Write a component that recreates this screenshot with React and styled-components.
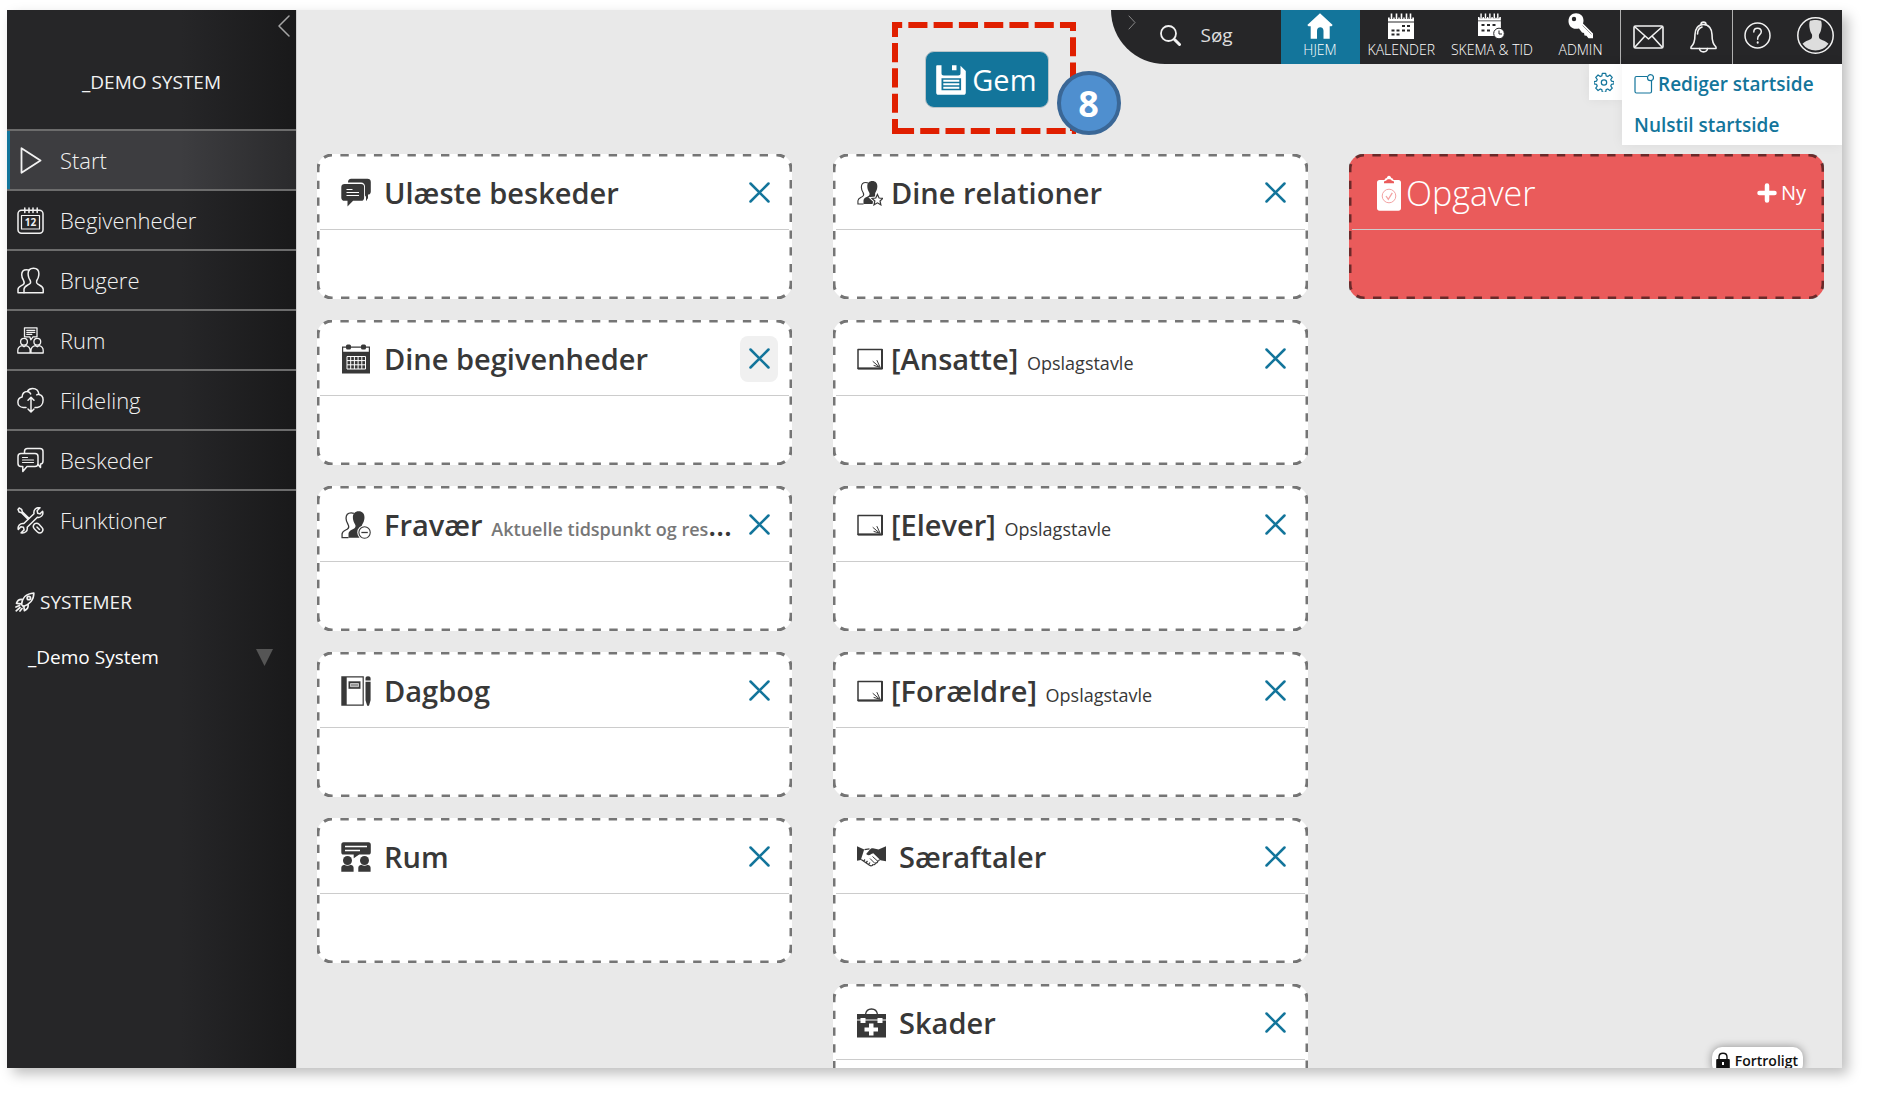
import React from "react";
import styled, { createGlobalStyle, css } from "styled-components";

const blue = "#13759b";

/* ---------- icons ---------- */

const Line = ({ w = 27, h = 27, box, sw = 1.5, children }) => (
  <svg
    width={w}
    height={h}
    viewBox={box || `0 0 ${w} ${h}`}
    fill="none"
    stroke="currentColor"
    strokeWidth={sw}
    strokeLinecap="round"
    strokeLinejoin="round"
    aria-hidden="true"
  >
    {children}
  </svg>
);

const Solid = ({ w = 30, h = 30, box, children }) => (
  <svg
    width={w}
    height={h}
    viewBox={box || `0 0 ${w} ${h}`}
    fill="currentColor"
    aria-hidden="true"
  >
    {children}
  </svg>
);

const headPath =
  "M16.5 1.2c3.5 0 5.4 2.3 5.4 5.6 0 1.6-.3 2.6-.6 3.6-.4 1.3-1.3 2.6-1.7 3.6-.3 1.3.1 2.6 1.2 3.2 2.5 1.4 5.2 2 5.4 5v3.6H7v-3.6c.2-3 2.9-3.6 5.3-5 1.1-.6 1.5-1.9 1.1-3.2-.4-1-1.3-2.3-1.7-3.6-.3-1-.6-2-.6-3.6 0-3.3 1.900-5.600 5.400-5.600z";
const backPath =
  "M12 3.2c-.8-.4-1.6-.5-2.5-.5-3 0-4.800 2.100-4.800 5 0 2.600 1 4.300 1.900 5.900.8 1.500.7 3.400-.8 4.300-2 1.200-4.600 1.700-4.800 4.400v3.500h6";

const PlayIcon = () => (
  <Line sw={1.8}>
    <path d="M4.500 1.200 23.500 13.500 4.500 25.800z" />
  </Line>
);

const Calendar12Icon = () => (
  <Line>
    <rect x="1" y="3.200" width="25" height="23" rx="3.500" />
    <rect x="4.500" y="8.500" width="18" height="13.500" strokeWidth="1.200" />
    <path d="M7.800 1v4.500M12 1v4.500M16 1v4.500M20.200 1v4.500" />
    <text
      x="13.500"
      y="19"
      textAnchor="middle"
      fontFamily="Open Sans, sans-serif"
      fontSize="10"
      fontWeight="700"
      fill="currentColor"
      stroke="none"
    >
      12
    </text>
  </Line>
);

const UsersIcon = () => (
  <Line>
    <path d={headPath} />
    <path d={backPath} />
  </Line>
);

const RoomIcon = () => (
  <Line sw={1.3}>
    <path d="M7.500.8h12.500v9h-4l-2.200 3-1-3h-5.300z" />
    <path d="M9.800 3.300h8M9.800 5.300h8M9.800 7.300h5" />
    <circle cx="7" cy="14.800" r="3.400" />
    <circle cx="20.300" cy="14.800" r="3.400" />
    <path d="M.8 26v-2.500c0-2.800 2-4.400 4.400-4.900l1.800 1.200 1.800-1.200c2.400.5 4.300 2.100 4.300 4.900V26zM14 26v-2.500c0-2.800 2-4.400 4.400-4.900l1.900 1.200 1.800-1.200c2.300.5 4.100 2.100 4.100 4.900V26z" />
  </Line>
);

const CloudIcon = () => (
  <Line>
    <path d="M9 20.500H6.200C3 20.300.9 18 .9 15.200c0-2.600 1.800-4.700 4.200-5.200-.1-3.300 2.300-5.800 5.300-5.600C11.600 2.300 13.500 1.500 15.600 1.500c3.500 0 6 2.400 6.400 5.900 2.500.5 4.100 2.700 4.100 5.500 0 4-2.500 7-5.700 7.600h-2.400" />
    <path d="M10.400 4.400c1.600.2 2.800 1 3.300 2.500M22 7.400c-.7-.1-1.500 0-2.300.4" />
    <path d="M14 10.500v14M11 13.300l3-3 3 3M11 22l3 3 3-3" />
  </Line>
);

const ChatIcon = () => (
  <Line>
    <path d="M7.500 6V4.500c0-2 1-3 3-3H23c2 0 3 1 3 3v9.500c0 2-.8 2.900-2.500 3v3.500L21 17.500" />
    <path d="M4 6.500h14c2 0 3 1 3 3v7c0 2-1 3-3 3H10l-4.200 5v-5H4c-2 0-3-1-3-3v-7c0-2 1-3 3-3z" />
    <path d="M5.500 10.500h5M5.500 13h11M5.500 15.500h11" strokeWidth="1.200" />
  </Line>
);

const ToolsIcon = () => (
  <Line>
    <path d="M2.200 1 1 2.500l1.200 2.600 2.300.6L11 12.300l1-1L5.300 4.800 4.600 2.300z" />
    <path d="M17 17.500c1-1.700 3.600-1.600 5-.2l2.700 2.900c1.500 1.600 1.500 3.500.3 4.800-1.300 1.300-3.300 1.200-4.800-.3L17.500 22c-1.300-1.300-1.500-3.100-.5-4.500z" />
    <path d="m20 20 2.500 2.500" />
    <path d="M25.600 4.300c1.200 3.500-1.600 6.700-5.200 6l-10.200 9.900c.8 3.700-2.500 6.600-6.100 5.600l3-2.900-.6-2.600-2.600-.6-2.600 2.800c-1-3.500 1.800-6.700 5.500-6L17 6.700c-.8-3.600 2.300-6.800 6-5.900l-2.900 3 .6 2.400 2.300.7z" />
  </Line>
);

const RocketIcon = () => (
  <Line w={20} h={20} sw={1.7}>
    <path d="M6.500 12.500C7 6.500 11 1.500 18.800 1c.2 6.500-4.300 11.500-10.500 13.500z" />
    <path d="M7.500 7.500C4.500 7 2.500 8.500 1.500 11.300l4.800.5M13 12.500c.8 2.800-1 4.900-3.600 6.200l-.6-4.500" />
    <circle cx="13.800" cy="6" r="1.700" />
    <path d="M4.500 13.500 1 15M5 15.500l-3.800 3.300M7 16.500 5 19" />
  </Line>
);

const ChatSolid = () => (
  <Solid>
    <path d="M7 4.500V4c0-2 1.200-3.300 3.200-3.300h16.300c2 0 3.300 1.200 3.300 3.200v9.500c0 1.900-1 3-2.800 3.200v5l-3-4V8.800c0-2.500-1.500-4.300-4-4.300z" />
    <path d="M3.600 6h16.500c2 0 3 1.200 3 3.200v10.500c0 2-1 3.100-3 3.100h-8L6.500 28.500v-5.700H3.600c-2 0-3.300-1.100-3.300-3.100V9.200C.3 7.200 1.600 6 3.600 6z" />
    <path
      d="M5.500 11.500h6M5.500 14.500h12.500M5.500 17.500h12.500"
      fill="none"
      stroke="#fff"
    />
    <path d="M25.500 16v6.500" fill="none" stroke="currentColor" />
  </Solid>
);

const CalendarSolid = () => (
  <Solid>
    <path d="M1 2.500h28v27H1zM2.200 3.700v4h25.600v-4z" fillRule="evenodd" />
    <rect x="5" y=".5" width="5" height="5" rx="1.500" />
    <rect x="20" y=".5" width="5" height="5" rx="1.500" />
    <path
      d="M6 12.500h18.500v12.500H6zM6 16.600h18.500M6 20.800h18.500M9.700 12.500v12.500M13.400 12.500v12.500M17.100 12.500v12.500M20.800 12.500v12.500"
      fill="none"
      stroke="#fff"
    />
  </Solid>
);

const UsersSolid = ({ w = 30, children }) => (
  <Solid w={w} h={w} box="0 0 28 28">
    <path d={backPath} fill="none" stroke="currentColor" strokeWidth="1.200" />
    <path d={headPath} />
    {children}
  </Solid>
);

const AbsenceIcon = () => (
  <UsersSolid>
    <circle cx="22" cy="21" r="6.800" fill="#fff" />
    <circle cx="22" cy="21" r="5.300" fill="#fff" stroke="currentColor" />
    <path d="M19 21h6" stroke="currentColor" strokeWidth="1.200" />
  </UsersSolid>
);

const RelationsIcon = () => (
  <UsersSolid w={26}>
    <path
      d="m22 15.500 1.800 3.900 4 .4-3 2.800.9 4.200-3.700-2.200-3.700 2.200.9-4.200-3-2.800 4-.4z"
      fill="#fff"
      stroke="#fff"
      strokeWidth="3.500"
    />
    <path
      d="m22 15.500 1.800 3.900 4 .4-3 2.800.9 4.200-3.700-2.200-3.700 2.200.9-4.200-3-2.800 4-.4z"
      fill="#fff"
      stroke="currentColor"
      strokeWidth="1.300"
    />
  </UsersSolid>
);

const DiaryIcon = () => (
  <Solid>
    <path
      d="M.3.300h22.500v29.500H.3zM5.700 1.500v27h15.900v-27z"
      fillRule="evenodd"
    />
    <path d="M7.500 5.300h12v7.500h-12z" />
    <path d="M9.500 7.500h8v3.200h-8z" fill="#999" stroke="#fff" strokeWidth=".6" />
    <path d="M24.500 2.500c0-1.300.9-2.200 2.500-2.200s2.600.9 2.600 2.200v2h-5.100zM24.500 5.800h5.100v18.500l-1.600 5.500h-1.800l-1.700-5.500z" />
  </Solid>
);

const MeetingIcon = () => (
  <Solid>
    <path d="M2.500.3h25c1.500 0 2.300.9 2.300 2.400v7.500c0 1.500-.8 2.300-2.300 2.300h-9.300l-5.500 3.800v-3.800H2.500c-1.500 0-2.200-.8-2.200-2.300V2.700C.3 1.200 1 .3 2.500.3z" />
    <path d="M4 4.500h22M4 8.500h15" stroke="#fff" strokeWidth="1.500" />
    <circle cx="6.500" cy="18.500" r="4.500" />
    <circle cx="23.500" cy="18.500" r="4.500" />
    <path d="M.3 29.800v-4c0-1.600 1.200-2.800 3-3.100 2 1.500 4.300 1.500 6.300 0 1.900.3 3 1.500 3 3.100v4zM17.300 29.800v-4c0-1.600 1.200-2.800 3-3.100 2 1.500 4.300 1.500 6.300 0 1.900.3 3 1.500 3 3.100v4z" />
  </Solid>
);

const BoardIcon = () => (
  <Line w={26} h={22} sw={1.5}>
    <path d="M1 1.500h24v19H1z" />
    <path d="M1.500 20.500h23.500V2" strokeWidth="2" />
    <path d="m16 13.500 6.500 5.500M20 12.500l3 6.500M17 17.500l5 1.500" strokeWidth="1" />
  </Line>
);

const HandshakeIcon = () => (
  <Solid w={29} h={21}>
    <path d="M0 .3 7.200 3.500 3.800 14 0 14.800z" />
    <path d="M29 .3 21.500 3.500 16 2.300c-1.300-.2-2.200.3-3 1.200L9.300 7.800c.8 2 3.200 1.800 5 .2l2-.8 7.200 7 5.500 1z" />
    <path
      d="M7.500 3.600 12.500 2.800M4.200 13.500l8.300 5.800c1.500 1 2.800.5 3.300-.6 1.500.3 2.500-.5 2.700-1.600 1.500 0 2.300-.9 2.200-2 1.300-.2 1.800-.9 1.700-1.700M8 13.500l-1.500 1.800M10.500 15l-1.700 2M13 16.500l-1.500 2"
      fill="none"
      stroke="currentColor"
      strokeWidth="1.200"
    />
    <path
      d="m13 12.500 4.500 4.500M15.500 10.500l5 4.500"
      fill="none"
      stroke="currentColor"
    />
  </Solid>
);

const FirstAidIcon = () => (
  <Solid w={29} h={30}>
    <path
      d="M8.500 6.500C9 2.800 11.500 1 14.500 1s5.500 1.800 6 5.500"
      fill="none"
      stroke="currentColor"
      strokeWidth="1.300"
    />
    <path d="M0 6h29v5.500H0zM0 12.500h29v17H0z" />
    <path d="M3.500 10h5v5h-5zM20.500 10h5v5h-5z" fill="#fff" />
    <path d="M12 15.500h4.500v4H21v4h-4.500v4H12v-4H7.500v-4H12z" fill="#fff" />
  </Solid>
);

const ClipboardIcon = () => (
  <Solid w={24} h={36}>
    <path
      d="M2.500 5h5c.3-1.200 1.200-2 2.200-2 .3-1.300 1.100-2.300 2.300-2.300s2 1 2.300 2.300c1 0 1.900.8 2.200 2h5C23 5 24 6 24 7.500v25.800c0 1.500-1 2.500-2.500 2.500h-19C1 35.800 0 34.800 0 33.300V7.500C0 6 1 5 2.500 5zM7 8.300h10V6.600l-2.400-1.200c-.5-1.600-4.700-1.600-5.200 0L7 6.600z"
      fillRule="evenodd"
    />
    <circle cx="12" cy="21" r="6.800" fill="none" stroke="#f3a3a3" />
    <path d="m9 21 2.300 3.300 4-6.500" fill="none" stroke="#f3a3a3" strokeWidth="1.300" />
  </Solid>
);

const CrossIcon = () => (
  <Line w={21} h={21} sw={2.5}>
    <path d="m1.500 1.500 18 18M19.500 1.500l-18 18" />
  </Line>
);

const PlusIcon = () => (
  <Line w={20} h={20} sw={4.5}>
    <path d="M10 2.500v15M2.500 10h15" />
  </Line>
);

const SaveIcon = () => (
  <Solid w={30} h={30}>
    <path
      d="M1.500.3h4v8c0 1.500.8 2.200 2.200 2.200h14.500c1.500 0 2.300-.7 2.300-2.200V.8L29.800 6v21.500c0 1.500-.8 2.300-2.200 2.300H2.400C1 29.800.2 29 .2 27.500V1.600C.2.800.6.3 1.500.3zM5.500 13.200v12.100h19.600V13.200z"
      fillRule="evenodd"
    />
    <path d="M16 .3h4.500v5H16zM7.300 14.800h16v2h-16zM7.300 18.300h16v2h-16zM7.300 21.800h16v2h-16z" />
  </Solid>
);

const HomeIcon = () => (
  <Solid w={26} h={26}>
    <path d="M13 .3 25.700 12l-1.200 1.300H22.700v12.400h-6.200v-8c0-4.500-6.500-4.500-6.500 0v8H3.700V13.300H1.500L.3 12z" />
  </Solid>
);

const CalendarTop = () => (
  <>
    <path d="M0 4.500h26v4H0zM0 9.500h26v16.500H0z" />
    <path
      d="M3.500 1v5M8.500 1v5M13.500 1v5M18.500 1v5M22.500 1v5"
      stroke="#262628"
      strokeWidth="3.500"
    />
    <path
      d="M3.500.500v5.500M8.500.500v5.500M13.500.500v5.500M18.500.500v5.500M22.500.500v5.500"
      stroke="#fff"
      strokeWidth="1.600"
    />
  </>
);

const CalendarIcon = () => (
  <Solid w={26} h={26}>
    <CalendarTop />
    <path
      d="M14 13h3M19 13h3M3.500 17.500h3M8.500 17.500h3M14 17.500h3M19 17.500h3M3.500 21.500h3M8.500 21.500h3"
      stroke="#262628"
      strokeWidth="2.200"
    />
  </Solid>
);

const ScheduleIcon = () => (
  <Solid w={27} h={26}>
    <g transform="scale(.88)">
      <CalendarTop />
    </g>
    <path
      d="M3.500 12h3M9 12h3M14.500 12h3M3.500 17.500h3M9 17.500h3"
      stroke="#262628"
      strokeWidth="2.200"
    />
    <circle cx="21" cy="20.500" r="5.300" stroke="#262628" strokeWidth="1" />
    <path d="M21 17.500v3.500h3" fill="none" stroke="#262628" />
  </Solid>
);

const KeyIcon = () => (
  <Solid w={26} h={26}>
    <path
      d="M8 .3c4.500 0 7.500 3 7.500 7.300 0 1.200-.2 2-.5 2.800l10 10.100v4.700h-4.500l-2-2.500-2-.3-.5-2.500-2-.5-3-4c-1 .3-2 .4-3 .4-4.300 0-7.500-3.200-7.500-7.600C.5 3.500 3.700.3 8 .3zM6 3.800a2.200 2.200 0 1 0 0 4.400 2.200 2.200 0 0 0 0-4.400z"
      fillRule="evenodd"
    />
    <path d="m14.500 12.500 9 9" stroke="#888" strokeWidth=".8" />
  </Solid>
);

const SearchIcon = () => (
  <Line w={21} h={21} sw={1.8}>
    <circle cx="8.500" cy="8.500" r="7.500" />
    <path d="m14.500 14.500 5 5" strokeWidth="3" />
  </Line>
);

const MailIcon = () => (
  <Line w={31} h={24} sw={1.6}>
    <rect x="1" y="1" width="29" height="22" rx="1.500" />
    <path d="m2 2 13.500 12L29 2M2 22l9.500-10.500M29 22l-9.500-10.500" />
  </Line>
);

const BellIcon = () => (
  <Line w={27} h={32} sw={1.6}>
    <path d="M13.500 3.500c-5.500 0-8.500 4.500-8.500 10 0 6.500-1 10-4 12.500v1.500h25V26c-3-2.500-4-6-4-12.500 0-5.500-3-10-8.500-10z" />
    <path d="M11 3.500C11 .3 16 .3 16 3.500M9.500 27.500c.5 4.500 7.500 4.500 8 0M7.500 13c0-3.500 1.500-6 4.500-7" />
  </Line>
);

const HelpIcon = () => (
  <Line>
    <circle cx="13.500" cy="13.500" r="12.500" />
    <path d="M9.800 10c0-2.300 1.500-3.700 3.700-3.700s3.800 1.300 3.800 3.500c0 2.900-3.600 3.200-3.600 6.400v1" />
    <path d="M13.700 20.300v.4" strokeWidth="2" />
  </Line>
);

const AvatarIcon = () => (
  <Line w={37} h={37} sw={1.5}>
    <circle cx="18.500" cy="18.500" r="17.700" />
    <path
      d="M13 3.800c3-1 8-1 11 0 1 2 .8 5.500.3 7.800-.3 2.500-1.300 4.700-2.300 6-.3 2 0 3.900 1.500 4.600 2.800 1.200 5.500 2.200 8 4.600a15.800 15.800 0 0 1-26 0c2.500-2.400 5.200-3.400 8-4.600 1.500-.7 1.800-2.600 1.500-4.600-1-1.300-2-3.500-2.300-6-.5-2.300-.7-5.800.3-7.800z"
      fill="#ddd"
      stroke="none"
    />
  </Line>
);

const GearIcon = () => (
  <Line w={20} h={20} box="0 0 24 24" sw={1.5}>
    <path d="M10 1.500h4l.6 3.100 1.900.8 2.600-1.800 2.800 2.800-1.800 2.600.8 1.900 3.100.6v2.800l-3.100.6-.8 1.900 1.800 2.600-2.800 2.800-2.600-1.800-1.900.8-.6 3.100h-4l-.6-3.100-1.900-.8-2.600 1.800-2.800-2.800 1.800-2.600-.8-1.900-3-.6v-2.800l3-.6.8-1.900-1.800-2.600 2.800-2.800 2.600 1.800 1.900-.8z" />
    <circle cx="12" cy="12.500" r="3.200" />
  </Line>
);

const EditIcon = () => (
  <Line w={20} h={20} sw={1.2}>
    <path d="M13 2.500H2.500c-1 0-1.500.5-1.500 1.500v13.500c0 1 .5 1.500 1.500 1.500h13.500c1 0 1.500-.5 1.500-1.500V7" />
    <circle cx="16.500" cy="3.700" r="3" />
  </Line>
);

const LockIcon = () => (
  <Solid w={14} h={17}>
    <path
      d="M3 8V5c0-5 8-5 8 0v3"
      fill="none"
      stroke="currentColor"
      strokeWidth="1.400"
    />
    <path
      d="M1.500 7h11c.9 0 1.300.5 1.300 1.300V17H.2V8.300C.2 7.500.7 7 1.500 7zM6 10v3h2v-3z"
      fillRule="evenodd"
    />
  </Solid>
);

/* ---------- data ---------- */

const menu = [
  { label: "Start", icon: PlayIcon, active: true },
  { label: "Begivenheder", icon: Calendar12Icon },
  { label: "Brugere", icon: UsersIcon },
  { label: "Rum", icon: RoomIcon },
  { label: "Fildeling", icon: CloudIcon },
  { label: "Beskeder", icon: ChatIcon },
  { label: "Funktioner", icon: ToolsIcon },
];

const tabs = [
  { label: "HJEM", icon: HomeIcon, active: true },
  { label: "KALENDER", icon: CalendarIcon },
  { label: "SKEMA & TID", icon: ScheduleIcon },
  { label: "ADMIN", icon: KeyIcon },
];

const columns = [
  [
    { title: "Ulæste beskeder", icon: ChatSolid },
    { title: "Dine begivenheder", icon: CalendarSolid, hovered: true },
    {
      title: "Fravær",
      icon: AbsenceIcon,
      note: "Aktuelle tidspunkt og res",
      cut: true,
    },
    { title: "Dagbog", icon: DiaryIcon },
    { title: "Rum", icon: MeetingIcon },
  ],
  [
    { title: "Dine relationer", icon: RelationsIcon, tight: true },
    { title: "[Ansatte]", icon: BoardIcon, note: "Opslagstavle", tight: true },
    { title: "[Elever]", icon: BoardIcon, note: "Opslagstavle", tight: true },
    { title: "[Forældre]", icon: BoardIcon, note: "Opslagstavle", tight: true },
    { title: "Særaftaler", icon: HandshakeIcon },
    { title: "Skader", icon: FirstAidIcon },
  ],
];

/* ---------- page ---------- */

const App = () => {
  return (
    <>
      <GlobalStyle />
      <Frame>
        <Sidebar>
          <CollapseButton aria-label="Skjul menu">
            <Line w={12} h={22} sw={1.5}>
              <path d="M11 1 1 11l10 10" />
            </Line>
          </CollapseButton>
          <SystemName>_DEMO SYSTEM</SystemName>
          <Nav>
            {menu.map(({ label, icon: Icon, active }) => (
              <NavItem key={label} href="#" $active={active}>
                <Icon />
                {label}
              </NavItem>
            ))}
          </Nav>
          <SystemsHead>
            <RocketIcon />
            SYSTEMER
          </SystemsHead>
          <SystemButton>
            _Demo System
            <svg width="17" height="17" viewBox="0 0 17 17" aria-hidden="true">
              <path d="M0 0h17L8.500 17z" fill="#555" />
            </svg>
          </SystemButton>
        </Sidebar>

        <Main>
          <Header>
            <SaveArea>
              <SaveWrap>
                <SaveButton>
                  <SaveIcon />
                  Gem
                </SaveButton>
                <Marker viewBox="0 0 184 112" aria-hidden="true">
                  <path d="M3 109V3H181V109z" />
                </Marker>
                <Step>8</Step>
              </SaveWrap>
            </SaveArea>
            <HeaderRight>
              <TopBar>
                <ExpandButton aria-label="Skjul søgning">
                  <Line w={8} h={15} sw={1}>
                    <path d="m1 1 6 6.500L1 14" />
                  </Line>
                </ExpandButton>
                <Search>
                  <SearchIcon />
                  <input type="search" aria-label="Søg" placeholder="Søg" />
                </Search>
                {tabs.map(({ label, icon: Icon, active }) => (
                  <Tab key={label} href="#" $active={active}>
                    <Icon />
                    {label}
                  </Tab>
                ))}
                <IconGroup>
                  <IconButton aria-label="Beskeder">
                    <MailIcon />
                  </IconButton>
                  <IconButton aria-label="Notifikationer">
                    <BellIcon />
                  </IconButton>
                </IconGroup>
                <IconGroup $last>
                  <IconButton aria-label="Hjælp">
                    <HelpIcon />
                  </IconButton>
                  <IconButton aria-label="Profil">
                    <AvatarIcon />
                  </IconButton>
                </IconGroup>
              </TopBar>
              <Settings>
                <GearButton aria-label="Indstillinger">
                  <GearIcon />
                </GearButton>
                <SettingsMenu>
                  <a href="#">
                    <EditIcon />
                    Rediger startside
                  </a>
                  <a href="#">Nulstil startside</a>
                </SettingsMenu>
              </Settings>
            </HeaderRight>
          </Header>

          <Board>
            {columns.map((cards, i) => (
              <Column key={i}>
                {cards.map(({ title, icon: Icon, note, cut, tight, hovered }) => (
                  <Card key={title}>
                    <Dashes />
                    <CardHead $tight={tight}>
                      <Icon />
                      <CardTitle>
                        {title}
                        {note && <Note $bold={cut}> {note}</Note>}
                        {cut && "…"}
                      </CardTitle>
                      <RemoveButton aria-label={`Fjern ${title}`} $hovered={hovered}>
                        <CrossIcon />
                      </RemoveButton>
                    </CardHead>
                  </Card>
                ))}
              </Column>
            ))}
            <Column>
              <Card $red>
                <Dashes />
                <TaskHead>
                  <ClipboardIcon />
                  <TaskTitle>Opgaver</TaskTitle>
                  <NewButton>
                    <PlusIcon />
                    Ny
                  </NewButton>
                </TaskHead>
              </Card>
            </Column>
          </Board>

          <Confidential>
            <LockIcon />
            Fortroligt
          </Confidential>
        </Main>
      </Frame>
    </>
  );
};

const Dashes = () => (
  <DashFrame aria-hidden="true">
    <rect pathLength="144" />
  </DashFrame>
);

const GlobalStyle = createGlobalStyle`
  * {
    box-sizing: border-box;
  }
  body {
    margin: 0;
    background: #ffffff;
    font-family: "Open Sans", "Noto Sans", sans-serif;
    color: #383838;
  }
  a {
    text-decoration: none;
  }
  button {
    font-family: inherit;
    border: none;
    background: none;
    padding: 0;
    color: inherit;
    cursor: pointer;
  }
  svg {
    display: block;
    flex-shrink: 0;
  }
`;

const Frame = styled.div`
  display: flex;
  height: calc(100vh - 40px);
  margin: 10px 40px 30px 7px;
  overflow: hidden;
  box-shadow: 6px 6px 12px rgba(0, 0, 0, 0.25);
`;

const Sidebar = styled.aside`
  display: flex;
  flex-direction: column;
  flex: 0 0 290px;
  background: linear-gradient(to right, #262628 60%, #19191a);
  border-right: 1px solid #cfcfcf;
  color: #f2f2f2;
`;

const CollapseButton = styled.button`
  align-self: flex-end;
  margin: 5px 6px 0 0;
  color: #a5a5a5;
`;

const SystemName = styled.div`
  padding: 31px 0 33px;
  text-align: center;
  font-size: 19px;
  line-height: 28px;
`;

const Nav = styled.nav`
  display: flex;
  flex-direction: column;
`;

const NavItem = styled.a`
  display: flex;
  align-items: center;
  gap: 16px;
  height: 60px;
  padding-left: 10px;
  border-top: 2px solid #6c6c6c;
  font-size: 22px;
  font-weight: 300;
  color: #f2f2f2;
  ${({ $active }) =>
    $active &&
    css`
      background: linear-gradient(to right, #3d3d40 60%, #2a2a2c);
      box-shadow: inset 3px 0 ${blue};
    `}
`;

const SystemsHead = styled.div`
  display: flex;
  align-items: center;
  gap: 5px;
  padding: 39px 0 0 8px;
  font-size: 19px;
  line-height: 28px;
`;

const SystemButton = styled.button`
  display: flex;
  align-items: center;
  justify-content: space-between;
  padding: 27px 23px 0 21px;
  font-size: 19px;
  font-weight: 500;
  line-height: 28px;
  color: #ffffff;
`;

const Main = styled.main`
  position: relative;
  flex: 1;
  min-width: 0;
  overflow: hidden;
  background: #e9e9e9;
`;

const Header = styled.header`
  display: flex;
  align-items: flex-start;
`;

const SaveArea = styled.div`
  display: flex;
  flex: 1;
  justify-content: flex-end;
  padding: 41px 62px 0 20px;
`;

const SaveWrap = styled.div`
  position: relative;
`;

const SaveButton = styled.button`
  display: flex;
  align-items: center;
  gap: 6px;
  height: 57px;
  padding: 0 11px 0 10px;
  border: 1px solid #b9c4c9;
  border-radius: 9px;
  background: ${blue};
  color: #ffffff;
  font-size: 29px;
`;

const Marker = styled.svg`
  position: absolute;
  top: -29px;
  left: -33px;
  width: 184px;
  height: 112px;
  fill: none;
  stroke: #e01f00;
  stroke-width: 6px;
  stroke-dasharray: 19.1 6.17;
  stroke-dashoffset: 7;
  pointer-events: none;
`;

const Step = styled.span`
  position: absolute;
  top: 20px;
  right: -72px;
  display: flex;
  align-items: center;
  justify-content: center;
  width: 64px;
  height: 64px;
  border: 4px solid #3a6796;
  border-radius: 50%;
  background: #4f8fcf;
  color: #ffffff;
  font-size: 36px;
  font-weight: 700;
`;

const HeaderRight = styled.div`
  display: flex;
  flex-direction: column;
`;

const TopBar = styled.div`
  display: flex;
  height: 54px;
  padding-left: 17px;
  border-bottom-left-radius: 54px;
  background: #262628;
  color: #f2f2f2;
`;

const ExpandButton = styled.button`
  align-self: flex-start;
  padding-top: 5px;
  color: #8a8a8a;
`;

const Search = styled.label`
  display: flex;
  align-items: center;
  gap: 20px;
  padding: 0 0 4px 24px;
  input {
    width: 80px;
    padding: 0;
    border: none;
    outline: none;
    background: none;
    font-family: inherit;
    font-size: 19px;
    color: #f2f2f2;
  }
  input::placeholder {
    color: #dddddd;
  }
`;

const Tab = styled.a`
  display: flex;
  flex-direction: column;
  align-items: center;
  min-width: 79px;
  padding: 3px 8px 0;
  background: ${({ $active }) => ($active ? blue : "transparent")};
  font-size: 14px;
  font-weight: 300;
  line-height: 21px;
  color: #ffffff;
`;

const IconGroup = styled.div`
  display: flex;
  align-items: center;
  gap: 26px;
  padding: ${({ $last }) => ($last ? "0 8px 4px 11px" : "0 15px 0 12px")};
  border-left: 1px solid #b0b0b0;
`;

const IconButton = styled.button`
  display: block;
`;

const Settings = styled.div`
  display: flex;
  align-items: flex-start;
  justify-content: flex-end;
`;

const GearButton = styled.button`
  display: flex;
  align-items: center;
  justify-content: center;
  width: 33px;
  height: 36px;
  padding-right: 3px;
  background: #ffffff;
  box-shadow: 0 0 12px rgba(0, 0, 0, 0.06);
  color: ${blue};
`;

const SettingsMenu = styled.div`
  display: flex;
  flex-direction: column;
  width: 220px;
  height: 81px;
  padding-left: 12px;
  background: #ffffff;
  box-shadow: 0 0 12px rgba(0, 0, 0, 0.06);
  a {
    display: flex;
    align-items: center;
    gap: 4px;
    height: 41px;
    font-size: 19px;
    font-weight: 600;
    color: ${blue};
  }
`;

const Board = styled.div`
  display: grid;
  grid-template-columns: repeat(3, minmax(0, 1fr));
  gap: 41px;
  padding: 9px 18px 0 20px;
`;

const Column = styled.div`
  display: flex;
  flex-direction: column;
  gap: 21px;
`;

const Card = styled.section`
  position: relative;
  height: 145px;
  border-radius: 15px;
  background: ${({ $red }) => ($red ? "#ea5b5b" : "#ffffff")};
  color: ${({ $red }) => ($red ? "#ffffff" : "#383838")};
`;

const DashFrame = styled.svg`
  position: absolute;
  inset: 0;
  width: 100%;
  height: 100%;
  pointer-events: none;
  rect {
    x: 1px;
    y: 1px;
    width: calc(100% - 2px);
    height: calc(100% - 2px);
    rx: 14px;
    fill: none;
    stroke: rgba(0, 0, 0, 0.54);
    stroke-width: 3px;
    stroke-dasharray: 1 1;
    stroke-dashoffset: 1;
  }
`;

const CardHead = styled.header`
  display: flex;
  align-items: center;
  gap: ${({ $tight }) => ($tight ? "8px" : "13px")};
  height: 76px;
  margin: 0 3px;
  padding: 2px 11px 0 21px;
  border-bottom: 1px solid #cccccc;
`;

const TaskHead = styled(CardHead)`
  gap: 5px;
  padding-left: 25px;
`;

const CardTitle = styled.h2`
  flex: 1;
  min-width: 0;
  margin: 0 -8px 0 0;
  overflow: hidden;
  white-space: nowrap;
  font-size: 29px;
  font-weight: 600;
  line-height: 40px;
`;

const Note = styled.small`
  margin-left: 4px;
  font-size: 18px;
  font-weight: ${({ $bold }) => ($bold ? 600 : 400)};
  line-height: 1;
  color: ${({ $bold }) => ($bold ? "#777777" : "#383838")};
`;

const RemoveButton = styled.button`
  display: flex;
  align-items: center;
  justify-content: center;
  width: 38px;
  height: 46px;
  border-radius: 8px;
  background: ${({ $hovered }) => ($hovered ? "#f0f0f0" : "transparent")};
  color: ${blue};
`;

const TaskTitle = styled.h2`
  flex: 1;
  margin: 0;
  font-size: 34px;
  font-weight: 300;
  line-height: 48px;
`;

const NewButton = styled.button`
  display: flex;
  align-items: center;
  gap: 4px;
  padding-right: 4px;
  font-size: 20px;
`;

const Confidential = styled.div`
  position: absolute;
  right: 39px;
  bottom: -6px;
  display: flex;
  align-items: center;
  gap: 5px;
  padding: 0 5px 0 4px;
  height: 27px;
  border-radius: 10px;
  background: #ffffff;
  box-shadow: 0 0 8px rgba(0, 0, 0, 0.4);
  color: #111111;
  font-size: 14px;
  font-weight: 600;
`;

export default App;
